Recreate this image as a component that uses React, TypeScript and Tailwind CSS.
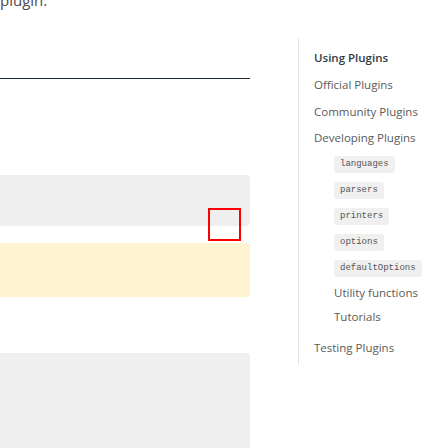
import React from 'react';

const TOP_LINKS = ['Official Plugins', 'Community Plugins'];
const API_KEYS = ['languages', 'parsers', 'printers', 'options', 'defaultOptions'];

export default function App() {
  return (
    <div
      className="flex h-[448px] w-[448px] overflow-hidden bg-white"
      style={{ fontFamily: '"Open Sans", "Noto Sans", sans-serif' }}
    >
      {/* Main column */}
      <div className="relative w-[250px] shrink-0">
        <p className="mt-[-10px] h-[20px] text-[15px] leading-[20px] text-[#4a4a4a]">plugin.</p>
        <div className="mt-[68px] h-px bg-[#1f2d3a]" />
        <div className="mt-[96px] h-[51px] rounded-r-[4px] bg-[#efefef]" />
        <div className="mt-[17px] h-[54px] bg-[#fff5d0]" />
        <div className="mt-[56px] h-[120px] rounded-tr-[4px] bg-[#efefef]" />
        <div className="absolute left-[208px] top-[208px] h-[33px] w-[33px] border-2 border-[#ff0000]" />
      </div>

      {/* Sidebar */}
      <nav className="ml-[48px] mt-[38px] w-[150px] self-start border-l border-[#e4e4e4] pb-[5px] pt-[6px] text-[11.5px] text-[#5a5a5a]">
        <ul>
          <li className="flex h-[27px] items-center pl-[15px] font-semibold text-[#2f3b45]">Using Plugins</li>
          {TOP_LINKS.map((t) => (
            <li key={t} className="flex h-[27px] items-center pl-[15px]">{t}</li>
          ))}
          <li className="flex h-[26px] items-center pl-[15px]">Developing Plugins</li>
          {API_KEYS.map((k) => (
            <li key={k} className="flex h-[26px] items-center pl-[35px]">
              <code
                className="rounded-[3px] bg-[#f0f0f0] px-[6px] py-[2px] text-[9px] leading-[13px] text-[#555]"
                style={{ fontFamily: '"Liberation Mono", monospace' }}
              >
                {k}
              </code>
            </li>
          ))}
          <li className="flex h-[24px] items-center pl-[35px]">Utility functions</li>
          <li className="flex h-[24px] items-center pl-[35px]">Tutorials</li>
          <li className="mt-[7px] flex h-[24px] items-center pl-[15px]">Testing Plugins</li>
        </ul>
      </nav>
    </div>
  );
}
